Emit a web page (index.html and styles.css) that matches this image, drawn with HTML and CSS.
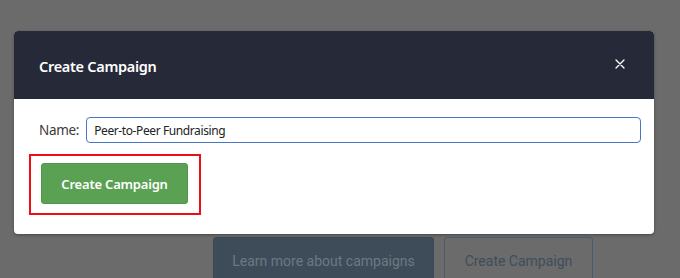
FILE: index.html
```html
<!DOCTYPE html>
<html lang="en">
<head>
    <meta charset="UTF-8" />
    <title>Create Campaign</title>
    <link rel="stylesheet" href="styles.css">
</head>
<body>
    <div class="modal">
        <header class="modal-header">
            <h2 class="modal-title">Create Campaign</h2>
            <button class="modal-close" aria-label="Close">
                <svg width="10" height="10" viewBox="0 0 10 10">
                    <path d="M1 1 L9 9 M9 1 L1 9" stroke="#fff" stroke-width="1.3" stroke-linecap="round"/>
                </svg>
            </button>
        </header>
        <div class="modal-body">
            <div class="field">
                <label class="field-label" for="name">Name:</label>
                <input class="field-input" id="name" type="text" value="Peer-to-Peer Fundraising">
            </div>
            <div class="highlight">
                <button class="btn-create">Create Campaign</button>
            </div>
        </div>
    </div>

    <div class="page-actions">
        <button class="btn-learn">Learn more about campaigns</button>
        <button class="btn-outline">Create Campaign</button>
    </div>
</body>
</html>
```

FILE: styles.css
```css
* {
    margin: 0;
    padding: 0;
    box-sizing: border-box;
}

body {
    background: #6b6b6b;
    height: 100vh;
    overflow: hidden;
    padding: 31px 26px 0 14px;
    font-family: "Noto Sans", "Open Sans", sans-serif;
}

.modal {
    width: 640px;
    background: #fff;
    border-radius: 4px;
    overflow: hidden;
    box-shadow: 0 1px 3px rgba(0, 0, 0, 0.35);
}

.modal-header {
    background: #262938;
    height: 68px;
    display: flex;
    align-items: center;
    justify-content: space-between;
    padding: 0 29px 0 25px;
}

.modal-title {
    color: #fff;
    font-size: 14.5px;
    font-weight: 600;
    letter-spacing: -0.3px;
    margin-top: 2px;
}

.modal-close {
    background: none;
    border: none;
    display: flex;
    margin-top: -3px;
}

.modal-body {
    padding: 18px 13px 19px 15px;
}

.field {
    display: flex;
    align-items: center;
    gap: 7px;
    padding-left: 10px;
}

.field-label {
    font-size: 13.5px;
    color: #3a3a3a;
    letter-spacing: -0.3px;
}

.field-input {
    flex: 1;
    height: 26px;
    border: 1.5px solid #4a76c7;
    border-radius: 4px;
    padding: 0 7px;
    font-family: inherit;
    font-size: 12px;
    letter-spacing: -0.4px;
    color: #222;
    outline: none;
}

.highlight {
    width: 172px;
    height: 61px;
    border: 2px solid #ee0d17;
    margin-top: 11px;
    padding: 7px 0 0 10px;
}

.btn-create {
    width: 147px;
    height: 41px;
    background: #5aa153;
    border: 1px solid #4f944a;
    border-radius: 3px;
    color: #fff;
    font-family: inherit;
    font-size: 13px;
    font-weight: 600;
    letter-spacing: -0.2px;
}

.page-actions {
    display: flex;
    gap: 10px;
    margin-top: 3px;
    padding-left: 199px;
}

.btn-learn,
.btn-outline {
    height: 48px;
    border-radius: 3px;
    font-family: Roboto, sans-serif;
    font-size: 14px;
}

.btn-learn {
    width: 221px;
    background: #3e4c59;
    border: 1px solid #3a4855;
    color: #6d7883;
}

.btn-outline {
    width: 149px;
    background: transparent;
    border: 1px solid #4b5c6a;
    color: #3f4d5a;
}
```
